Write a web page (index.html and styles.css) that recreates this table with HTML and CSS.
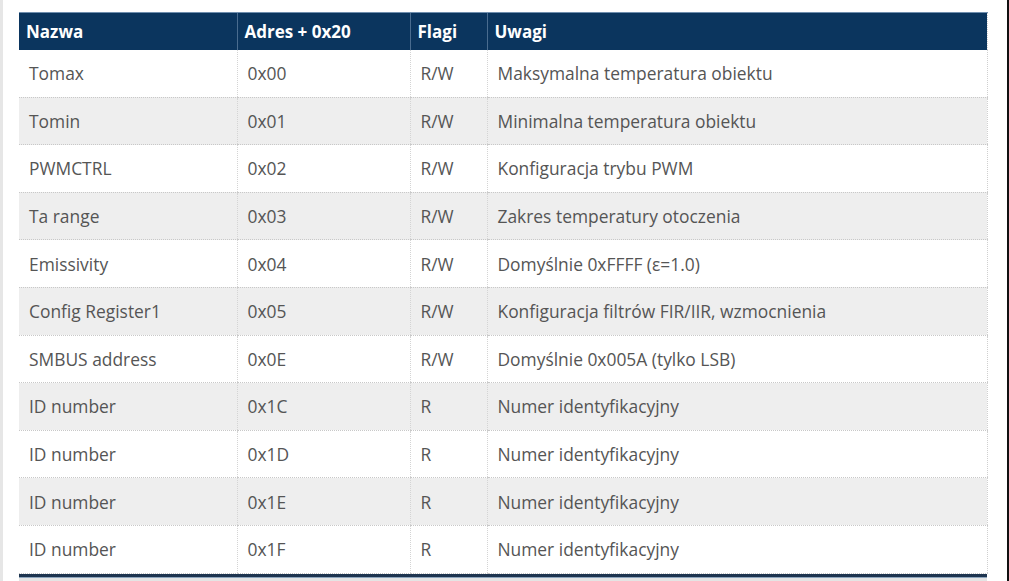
FILE: index.html
```html
<!DOCTYPE html>
<html lang="pl">
<head>
<meta charset="utf-8">
<link rel="stylesheet" href="styles.css">
</head>
<body>
<div class="page">
  <div class="content">
    <table class="regs">
      <colgroup>
        <col class="c1"><col class="c2"><col class="c3"><col class="c4">
      </colgroup>
      <thead>
        <tr><th>Nazwa</th><th>Adres + 0x20</th><th>Flagi</th><th>Uwagi</th></tr>
      </thead>
      <tbody>
        <tr><td>Tomax</td><td>0x00</td><td>R/W</td><td>Maksymalna temperatura obiektu</td></tr>
        <tr><td>Tomin</td><td>0x01</td><td>R/W</td><td>Minimalna temperatura obiektu</td></tr>
        <tr><td>PWMCTRL</td><td>0x02</td><td>R/W</td><td>Konfiguracja trybu PWM</td></tr>
        <tr><td>Ta range</td><td>0x03</td><td>R/W</td><td>Zakres temperatury otoczenia</td></tr>
        <tr><td>Emissivity</td><td>0x04</td><td>R/W</td><td>Domyślnie 0xFFFF (ε=1.0)</td></tr>
        <tr><td>Config Register1</td><td>0x05</td><td>R/W</td><td>Konfiguracja filtrów FIR/IIR, wzmocnienia</td></tr>
        <tr><td>SMBUS address</td><td>0x0E</td><td>R/W</td><td>Domyślnie 0x005A (tylko LSB)</td></tr>
        <tr><td>ID number</td><td>0x1C</td><td>R</td><td>Numer identyfikacyjny</td></tr>
        <tr><td>ID number</td><td>0x1D</td><td>R</td><td>Numer identyfikacyjny</td></tr>
        <tr><td>ID number</td><td>0x1E</td><td>R</td><td>Numer identyfikacyjny</td></tr>
        <tr><td>ID number</td><td>0x1F</td><td>R</td><td>Numer identyfikacyjny</td></tr>
      </tbody>
    </table>
    <div class="rule"></div>
  </div>
</div>
</body>
</html>
```
FILE: styles.css
```css
html, body {
  margin: 0;
  padding: 0;
  background: #fff;
}
body {
  font-family: "Open Sans", "DejaVu Sans", sans-serif;
  width: 1009px;
  height: 581px;
  overflow: hidden;
}
.page {
  height: 581px;
  box-sizing: border-box;
  border-left: 3px solid #e6e6e6;
  border-right: 2px solid #111;
  background: #fff;
  overflow: hidden;
}
.content {
  padding: 12px 0 0 16px;
}
.regs {
  width: 968px;
  border-collapse: collapse;
  table-layout: fixed;
  border-right: 1px dotted #cfcfcf;
}
.c1 { width: 218px; }
.c2 { width: 173px; }
.c3 { width: 77px; }
.c4 { width: 500px; }
.regs th {
  background: #0b355e;
  color: #fff;
  font-weight: 700;
  font-size: 17px;
  text-align: left;
  height: 37px;
  padding: 0 7px;
  box-sizing: border-box;
  border-top: 1px solid #6f8eae;
  border-left: 1px solid #4a6c8f;
  vertical-align: middle;
}
.regs th:first-child { border-left: none; }
.regs td {
  color: #555;
  font-size: 17.4px;
  height: 47.6px;
  padding: 0 10px;
  box-sizing: border-box;
  vertical-align: middle;
  border-bottom: 1px dotted #c8c8c8;
  border-left: 1px dotted #d4d4d4;
  white-space: nowrap;
}
.regs td:first-child { border-left: none; }
.regs tbody tr:nth-child(even) td { background: #eeeeee; }
.rule {
  width: 968px;
  height: 3px;
  background: #1e3550;
  border-bottom: 1px solid #8fa6bd;
  box-shadow: 0 4px 0 0 #e4e4e4;
}
```
